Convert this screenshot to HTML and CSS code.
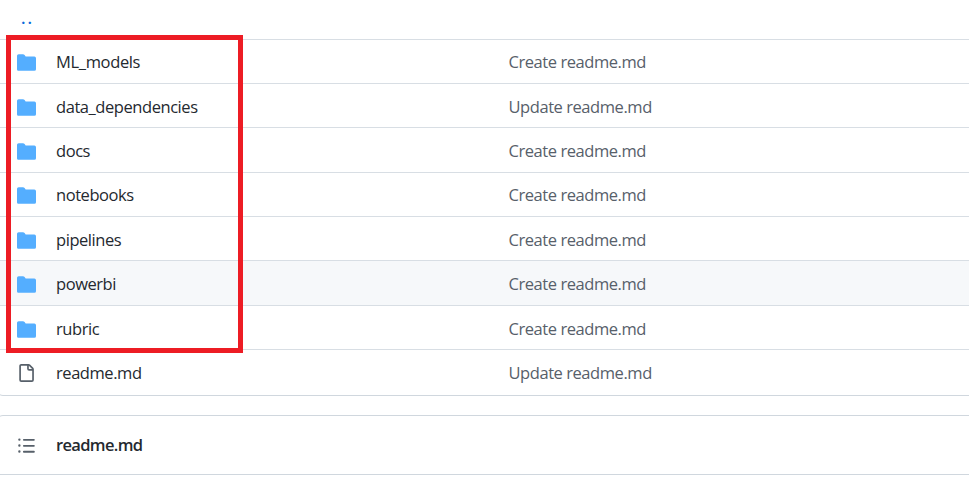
FILE: index.html
```html
<!DOCTYPE html>
<html lang="en">
<head>
<meta charset="utf-8">
<title>Repository files</title>
<link rel="stylesheet" href="styles.css">
</head>
<body>
<svg class="defs" aria-hidden="true">
<symbol id="folder" viewBox="0 0 16 16" preserveAspectRatio="none"><path d="M1.4 1A1.4 1.4 0 0 0 0 2.4v11.2C0 14.4.6 15 1.4 15h13.2A1.4 1.4 0 0 0 16 13.6v-9.2A1.4 1.4 0 0 0 14.6 3H7.5a.25.25 0 0 1-.2-.1l-.9-1.2C6.07 1.26 5.55 1 5 1H1.4Z"/></symbol>
<symbol id="file" viewBox="0 0 16 16"><path d="M2 1.75C2 .784 2.784 0 3.75 0h6.586c.464 0 .909.184 1.237.513l2.914 2.914c.329.328.513.773.513 1.237v9.586A1.75 1.75 0 0 1 13.25 16h-9.5A1.75 1.75 0 0 1 2 14.25Zm1.75-.25a.25.25 0 0 0-.25.25v12.5c0 .138.112.25.25.25h9.5a.25.25 0 0 0 .25-.25V6h-2.75A1.75 1.75 0 0 1 9 4.25V1.5Zm6.75.062V4.25c0 .138.112.25.25.25h2.688l-.011-.013-2.914-2.914-.013-.011Z"/></symbol>
<symbol id="list" viewBox="0 0 16 16"><path d="M5.75 2.5h8.5a.75.75 0 0 1 0 1.5h-8.5a.75.75 0 0 1 0-1.5Zm0 5h8.5a.75.75 0 0 1 0 1.5h-8.5a.75.75 0 0 1 0-1.5Zm0 5h8.5a.75.75 0 0 1 0 1.5h-8.5a.75.75 0 0 1 0-1.5ZM2 14a1 1 0 1 1 0-2 1 1 0 0 1 0 2Zm1-6a1 1 0 1 1-2 0 1 1 0 0 1 2 0ZM2 4a1 1 0 1 1 0-2 1 1 0 0 1 0 2Z"/></symbol>
</svg>
<main>
<section class="files">
<div class="parent"><span class="dots">..</span></div>
<div class="row"><svg class="icon folder"><use href="#folder"/></svg><span class="name models">ML_models</span><span class="message">Create readme.md</span></div>
<div class="row low"><svg class="icon folder"><use href="#folder"/></svg><span class="name">data_dependencies</span><span class="message">Update readme.md</span></div>
<div class="row tall low"><svg class="icon folder"><use href="#folder"/></svg><span class="name">docs</span><span class="message">Create readme.md</span></div>
<div class="row"><svg class="icon folder"><use href="#folder"/></svg><span class="name">notebooks</span><span class="message">Create readme.md</span></div>
<div class="row low"><svg class="icon folder"><use href="#folder"/></svg><span class="name">pipelines</span><span class="message">Create readme.md</span></div>
<div class="row tall low hovered"><svg class="icon folder"><use href="#folder"/></svg><span class="name">powerbi</span><span class="message">Create readme.md</span></div>
<div class="row low"><svg class="icon folder"><use href="#folder"/></svg><span class="name">rubric</span><span class="message">Create readme.md</span></div>
<div class="row last"><svg class="icon file"><use href="#file"/></svg><span class="name">readme.md</span><span class="message">Update readme.md</span></div>
</section>
<section class="readme">
<header class="readme-head"><svg class="icon"><use href="#list"/></svg><h2>readme.md</h2></header>
</section>
</main>
<div class="highlight"></div>
</body>
</html>
```
FILE: styles.css
```css
* { box-sizing: border-box; }
html { overflow: hidden; }
body {
  margin: 0;
  height: 490px;
  overflow: hidden;
  position: relative;
  background: #fff;
  color: #24292f;
  font: 400 16.5px/24px "Segoe UI", "Open Sans", sans-serif;
  letter-spacing: -0.44px;
}
.defs { display: none; }
main { margin-left: -4px; }
.files {
  border: 1px solid #d0d7de;
  border-top: 0;
  border-right: 0;
  border-radius: 0 0 0 7px;
  height: 396px;
}
.parent { height: 39px; padding: 6px 0 0 24px; color: #0969da; font-weight: 600; }
.dots { letter-spacing: 2px; }
.row {
  display: grid;
  grid-template-columns: 40px 452.5px 1fr;
  align-items: center;
  height: 44px;
  padding-left: 19px;
  border-top: 1px solid #d8dee4;
}
.tall { height: 45px; }
.low { padding-top: 2px; }
.last { height: 46px; }
.models { letter-spacing: -0.35px; }
.hovered { background: #f6f8fa; }
.icon { width: 19px; height: 19px; margin-left: 1px; fill: #57606a; }
.folder { margin-top: 1px; fill: #54aeff; }
.file { width: 18px; height: 18px; }
.message { color: #57606a; }
.readme {
  margin-top: 19px;
  height: 75px;
  border: 1px solid #d0d7de;
  border-right: 0;
  border-bottom: 0;
  border-radius: 7px 0 0 0;
}
.readme-head {
  display: grid;
  grid-template-columns: 40px 1fr;
  align-items: center;
  height: 59px;
  padding-left: 19px;
  border-bottom: 1px solid #d0d7de;
}
h2 { margin: 0; font-size: 16.5px; font-weight: 600; letter-spacing: -0.65px; }
.highlight {
  position: absolute;
  left: 6px;
  top: 35px;
  width: 237px;
  height: 318px;
  border: 5px solid #ed1c24;
}
```
